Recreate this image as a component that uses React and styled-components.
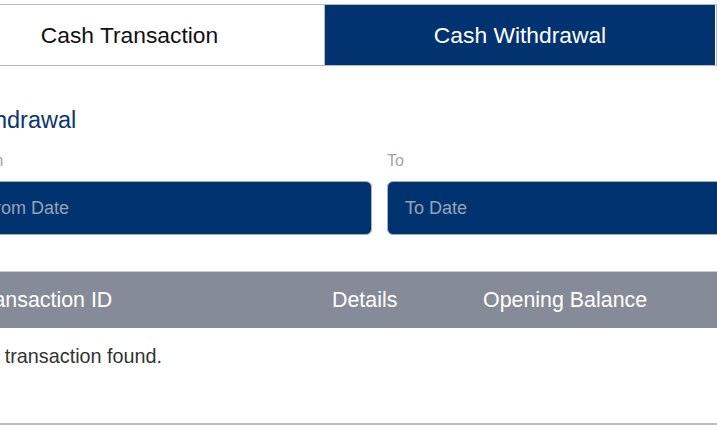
import React from "react";
import styled, { createGlobalStyle } from "styled-components";

const GlobalStyle = createGlobalStyle`
  html, body {
    margin: 0;
    padding: 0;
    background: #fff;
    overflow: hidden;
  }
  body {
    font-family: "Liberation Sans", Arial, sans-serif;
  }
`;

const Page = styled.div`
  width: 860px;
  margin-left: -65px;
  padding-top: 4px;
`;

const Tabs = styled.div`
  display: grid;
  grid-template-columns: 390px 390px;
  width: 781px;
  border-top: 1px solid #b6bcc6;
  border-bottom: 1px solid #b6bcc6;
  border-right: 1px solid #b6bcc6;
`;

const Tab = styled.div`
  height: 60px;
  display: flex;
  align-items: center;
  justify-content: center;
  font-size: 22.8px;
  color: ${(p) => (p.$active ? "#ffffff" : "#111111")};
  background: ${(p) => (p.$active ? "#003370" : "#ffffff")};
  border-right: ${(p) => (p.$active ? "none" : "1px solid #b6bcc6")};
`;

const Content = styled.div`
  padding-left: 31px;
`;

const Heading = styled.h2`
  margin: 41px 0 0 -6px;
  font-size: 23.5px;
  line-height: 27px;
  font-weight: normal;
  color: #0d3571;
`;

const Filters = styled.div`
  display: grid;
  grid-template-columns: 406px 406px;
  column-gap: 15px;
  margin-top: 16px;
`;

const Field = styled.div`
  display: flex;
  flex-direction: column;
`;

const Label = styled.label`
  font-size: 16px;
  line-height: 20px;
  color: #a3a3a3;
  margin-top: 1px;
  margin-bottom: 10px;
`;

const DateInput = styled.input`
  box-sizing: border-box;
  height: 54px;
  padding: 0 17px;
  border: 1px solid #9fb0c9;
  border-radius: 6px;
  background: #003370;
  font-family: "Liberation Sans", Arial, sans-serif;
  font-size: 18px;
  color: #ffffff;
  outline: none;
  &::placeholder {
    color: #97a3b6;
  }
`;

const Table = styled.div`
  width: 827px;
  margin-top: 36px;
`;

const HeaderRow = styled.div`
  display: grid;
  grid-template-columns: 350px 151px 1fr;
  height: 57px;
  align-items: center;
  background: #858c98;
  border-top: 1px solid #c4c8cf;
  box-sizing: border-box;
`;

const HeaderCell = styled.div`
  padding-left: ${(p) => p.$inset || 16}px;
  font-size: 21.4px;
  color: #ffffff;
`;

const EmptyRow = styled.div`
  box-sizing: border-box;
  height: 97px;
  padding: 16px 0 0 8px;
  font-size: 19.8px;
  line-height: 24px;
  color: #333333;
  border-bottom: 2px solid #b7bcc4;
`;

export default function App() {
  return (
    <>
      <GlobalStyle />
      <Page>
        <Tabs>
          <Tab>Cash Transaction</Tab>
          <Tab $active>Cash Withdrawal</Tab>
        </Tabs>
        <Content>
          <Heading>Withdrawal</Heading>
          <Filters>
            <Field>
              <Label>From</Label>
              <DateInput placeholder="From Date" />
            </Field>
            <Field>
              <Label>To</Label>
              <DateInput placeholder="To Date" />
            </Field>
          </Filters>
          <Table>
            <HeaderRow>
              <HeaderCell $inset={8}>Transaction ID</HeaderCell>
              <HeaderCell>Details</HeaderCell>
              <HeaderCell>Opening Balance</HeaderCell>
            </HeaderRow>
            <EmptyRow>No transaction found.</EmptyRow>
          </Table>
        </Content>
      </Page>
    </>
  );
}
